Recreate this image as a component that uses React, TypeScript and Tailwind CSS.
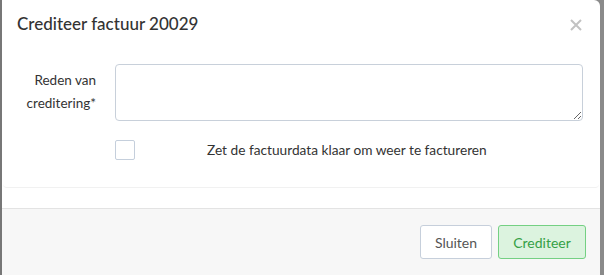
import React from "react";

function CloseIcon() {
  return (
    <svg width="12" height="12" viewBox="0 0 12 12" className="text-[#c2c2c2]">
      <path d="M1 1L11 11M11 1L1 11" stroke="currentColor" strokeWidth="2" />
    </svg>
  );
}

export default function App() {
  return (
    <div
      className="w-[604px] h-[275px] overflow-hidden bg-[#8a8a8a] flex"
      style={{ fontFamily: "Lato, 'Noto Sans', sans-serif" }}
    >
      <div className="w-[2px] h-full bg-[#777]" />
      <div className="w-[598px] h-full bg-white rounded-tr-[6px] flex flex-col">
        {/* header */}
        <div className="h-[48px] flex items-center justify-between pl-[15px] pr-[18px]">
          <h4 className="text-[17px] text-[#333] font-medium">
            Crediteer factuur 20029
          </h4>
          <button type="button" className="mt-[2px]">
            <CloseIcon />
          </button>
        </div>

        {/* body */}
        <div className="px-px">
          <div className="h-[140px] rounded-b-[4px] border-b border-[#f1f1f1] pt-[16px]">
            <div className="flex">
              <label className="w-[93px] text-right text-[13.5px] leading-[23px] text-[#333] pt-[5px]">
                Reden van
                <br />
                creditering*
              </label>
              <textarea className="ml-[19px] w-[468px] h-[57px] border border-[#c8d0da] rounded-[4px] resize-y" />
            </div>
            <div className="flex items-center mt-[19px]">
              <div className="ml-[112px] w-[20px] h-[20px] border border-[#c5cfdc] rounded-[2px]" />
              <span className="ml-[72px] text-[13.7px] text-[#333]">
                Zet de factuurdata klaar om weer te factureren
              </span>
            </div>
          </div>
        </div>

        {/* footer */}
        <div className="mt-[20px] flex-1 bg-[#f7f7f7] border-t border-[#e3e3e3] flex justify-end items-start pt-[16px] pr-[14px] gap-[6px]">
          <button
            type="button"
            className="w-[72px] h-[34px] bg-white border border-[#c6cfdb] rounded-[3px] text-[14px] text-[#555]"
          >
            Sluiten
          </button>
          <button
            type="button"
            className="w-[88px] h-[34px] bg-[#dcf3df] border border-[#74d083] rounded-[3px] text-[14px] text-[#35a046]"
          >
            Crediteer
          </button>
        </div>
      </div>
    </div>
  );
}
